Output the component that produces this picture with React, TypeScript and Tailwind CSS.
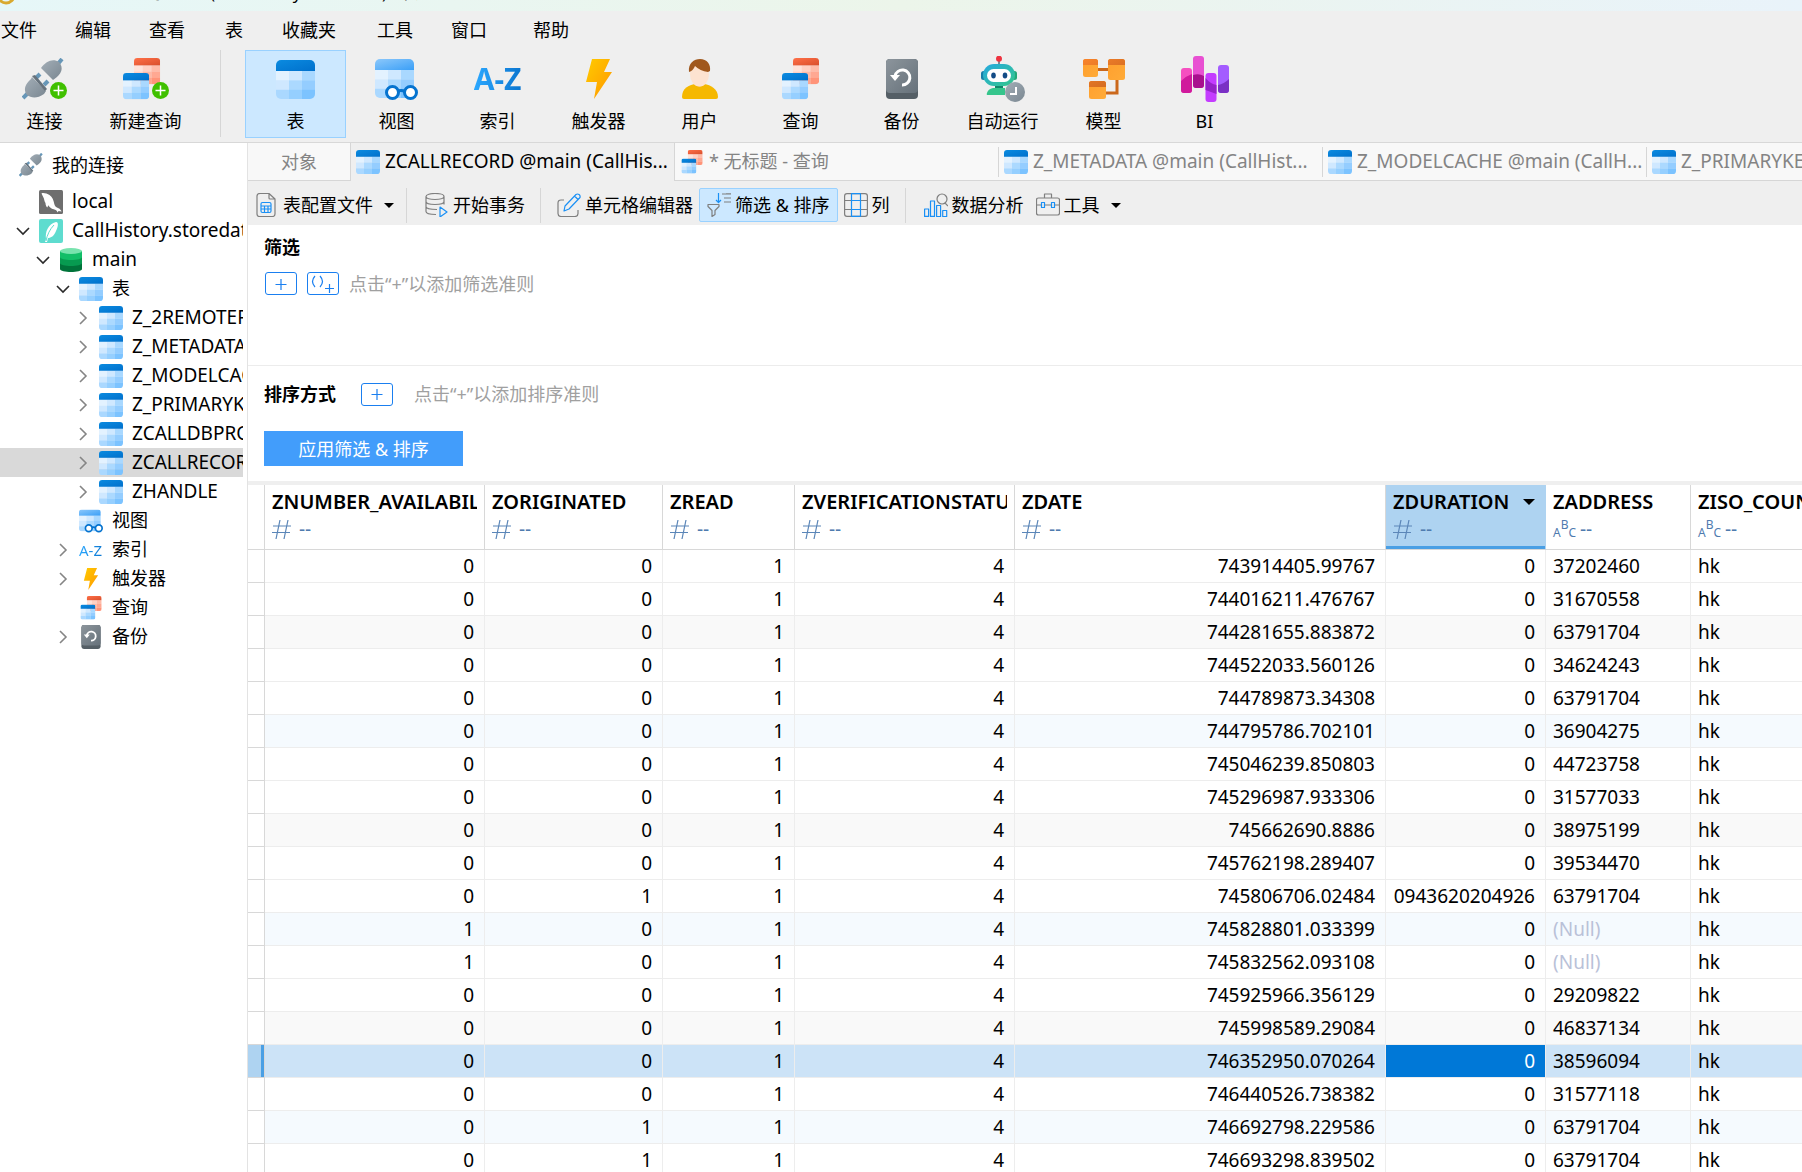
import type { ReactNode } from 'react'
import clsx from 'clsx'

const MENUS = [
  { label: '文件', width: 'w-[74px]' },
  { label: '编辑', width: 'w-[74px]' },
  { label: '查看', width: 'w-[76px]' },
  { label: '表', width: 'w-[57px]' },
  { label: '收藏夹', width: 'w-[95px]' },
  { label: '工具', width: 'w-[74px]' },
  { label: '窗口', width: 'w-[82px]' },
  { label: '帮助', width: 'w-[74px]' },
]

const TABLES = ['Z_2REMOTEPARTICIPANTHANDLES', 'Z_METADATA', 'Z_MODELCACHE', 'Z_PRIMARYKEY', 'ZCALLDBPROPERTIES', 'ZCALLRECORD', 'ZHANDLE']

const COLUMNS = [
  { name: 'ZNUMBER_AVAILABILITY', type: 'num' },
  { name: 'ZORIGINATED', type: 'num' },
  { name: 'ZREAD', type: 'num' },
  { name: 'ZVERIFICATIONSTATUS', type: 'num' },
  { name: 'ZDATE', type: 'num' },
  { name: 'ZDURATION', type: 'num' },
  { name: 'ZADDRESS', type: 'text' },
  { name: 'ZISO_COUNTRY_CODE', type: 'text' },
]

const ROWS: [string, string, string, string, string | null][] = [
  ['0', '0', '743914405.99767', '0', '37202460'],
  ['0', '0', '744016211.476767', '0', '31670558'],
  ['0', '0', '744281655.883872', '0', '63791704'],
  ['0', '0', '744522033.560126', '0', '34624243'],
  ['0', '0', '744789873.34308', '0', '63791704'],
  ['0', '0', '744795786.702101', '0', '36904275'],
  ['0', '0', '745046239.850803', '0', '44723758'],
  ['0', '0', '745296987.933306', '0', '31577033'],
  ['0', '0', '745662690.8886', '0', '38975199'],
  ['0', '0', '745762198.289407', '0', '39534470'],
  ['0', '1', '745806706.02484', '0943620204926', '63791704'],
  ['1', '0', '745828801.033399', '0', null],
  ['1', '0', '745832562.093108', '0', null],
  ['0', '0', '745925966.356129', '0', '29209822'],
  ['0', '0', '745998589.29084', '0', '46837134'],
  ['0', '0', '746352950.070264', '0', '38596094'],
  ['0', '0', '746440526.738382', '0', '31577118'],
  ['0', '1', '746692798.229586', '0', '63791704'],
  ['0', '1', '746693298.839502', '0', '63791704'],
]

const SELECTED_ROW = 15

type IconProps = { className?: string }

function Gradients() {
  const stops = [
    ['blueHead', '#0b8be0', '#0070cc'],
    ['lightHead', '#8cc8fb', '#3a9ff7'],
    ['redHead', '#ff7048', '#d94f2c'],
    ['bolt', '#ffcb00', '#ff9600'],
    ['plug', '#a3aeb7', '#7a8791'],
    ['backup', '#8c959c', '#66717a'],
    ['robot', '#25a9e0', '#35c78a'],
    ['orange', '#ff9f2e', '#ffab38'],
    ['orangeHead', '#f9842b', '#c9651f'],
  ]
  return (
    <svg className="absolute size-0" aria-hidden="true">
      <defs>
        {stops.map(([id, from, to]) => (
          <linearGradient key={id} id={id} x1="0" y1="0" x2="1" y2="1">
            <stop offset="0" stopColor={from} />
            <stop offset="1" stopColor={to} />
          </linearGradient>
        ))}
        <clipPath id="gridClip">
          <rect width="39" height="39" rx="5" />
        </clipPath>
      </defs>
    </svg>
  )
}

const BLUE_CELLS = ['#e3f2ff', '#cfe8ff', '#a9d8ff', '#cfe8ff', '#abd9ff', '#94cdff', '#aad8ff', '#95cfff', '#7cc3ff']
const RED_CELLS = ['#ffe3da', '#ffd1c4', '#ffbba8', '#ffd1c4', '#ffb9a6', '#ffa892', '#ffb9a6', '#ffa58e', '#ff9479']

function Grid({ head = 'url(#blueHead)', cells = BLUE_CELLS }: { head?: string; cells?: string[] }) {
  return (
    <g clipPath="url(#gridClip)">
      {cells.map((fill, i) => (
        <rect key={i} x={(i % 3) * 13} y={11 + Math.floor(i / 3) * 9.4} width="13.2" height="9.6" fill={fill} />
      ))}
      <rect width="39" height="11" fill={head} />
    </g>
  )
}

function TableIcon({ className = 'size-6' }: IconProps) {
  return (
    <svg viewBox="0 0 39 39" className={clsx('shrink-0', className)}>
      <Grid />
    </svg>
  )
}

function ViewIcon({ className = 'size-6' }: IconProps) {
  return (
    <svg viewBox="0 0 43 41" className={clsx('shrink-0', className)}>
      <Grid head="url(#lightHead)" />
      <g stroke="#0573cf" strokeWidth="3" fill="#fff">
        <path d="M22 32.5q4-2 8 0" fill="none" />
        <circle cx="17.500" cy="33.500" r="6" />
        <circle cx="35.500" cy="33.500" r="6" />
      </g>
    </svg>
  )
}

function PlusBadge({ x, y }: { x: number; y: number }) {
  return (
    <g>
      <circle cx={x} cy={y} r="8.500" fill="#40c000" />
      <path d={`M${x - 5} ${y}h10M${x} ${y - 5}v10`} stroke="#fff" strokeWidth="1.500" />
    </g>
  )
}

function QueryIcon({ className = 'size-6', plus = false }: IconProps & { plus?: boolean }) {
  return (
    <svg viewBox={plus ? '0 0 46 42' : '0 0 37 42'} className={clsx('shrink-0', className)}>
      <g transform="translate(11 0) scale(.67)">
        <Grid head="url(#redHead)" cells={RED_CELLS} />
      </g>
      <g transform="translate(0 15) scale(.67)">
        <Grid />
      </g>
      {plus && <PlusBadge x={37.5} y={32.5} />}
    </svg>
  )
}

function PlugIcon({ className = 'size-6', plus = false }: IconProps & { plus?: boolean }) {
  return (
    <svg viewBox={plus ? '0 0 46 42' : '0 0 42 42'} className={clsx('shrink-0', className)}>
      <g stroke="#6797b8" strokeWidth="4" strokeLinecap="butt">
        <path d="M1 40l6-6M35 7l5-6M14 20l4-4M22 27l4-4" />
      </g>
      <path d="M19 10c5-7 12-10 18-6 5 6 3 12-6 18z" fill="url(#plug)" />
      <path d="M10 19L24 33l-2 3c-7 5-13 4-17 1-4-5-2-11 4-16z" fill="url(#plug)" />
      <path d="M10 18l3-1 12 14-2 2z" fill="#66727c" />
      {plus && <PlusBadge x={36.5} y={32.5} />}
    </svg>
  )
}

function BoltIcon({ className = 'size-6' }: IconProps) {
  return (
    <svg viewBox="0 0 28 40" className={clsx('shrink-0', className)}>
      <path d="M7 0h18l-6 13h8L9 40l3-17H1z" fill="url(#bolt)" />
    </svg>
  )
}

function AzIcon({ large = false }: { large?: boolean }) {
  return (
    <span
      className={clsx(
        'bg-linear-to-r from-[#2ba8ff] to-[#0a76d0] bg-clip-text text-transparent',
        large ? 'text-[30px] leading-[42px] font-bold' : 'w-6 text-[15px] leading-6',
      )}
    >
      A-Z
    </span>
  )
}

function UserIcon({ className }: IconProps) {
  return (
    <svg viewBox="0 0 36 40" className={className}>
      <path d="M0 38c0-9 7-12 13-13h9c7 1 14 5 14 13q0 2-2 2H2q-2 0-2-2z" fill="#f5b800" />
      <path d="M12 23h11v2q-5 5-11 0z" fill="#f7cfb4" />
      <ellipse cx="17.500" cy="15.500" rx="9.500" ry="12" fill="#fde3d0" />
      <path d="M7 13C6 4 12 0 18 0c7 0 11 5 10 12l-2 1q-8-1-13-6-2 5-6 6z" fill="#a0581d" />
    </svg>
  )
}

function BackupIcon({ className = 'h-6 w-5' }: IconProps) {
  return (
    <svg viewBox="0 0 32 40" className={clsx('shrink-0', className)}>
      <rect width="32" height="40" rx="4" fill="#555f66" />
      <path d="M4 0h24q4 0 4 4v26q0 4-4 4H4q-4 0-4-4V4q0-4 4-4z" fill="url(#backup)" />
      <path d="M9 17a7.500 7.500 0 1 1 7 9" fill="none" stroke="#fff" strokeWidth="3" />
      <path d="M4 16h10l-5 6z" fill="#fff" />
    </svg>
  )
}

function RobotIcon({ className }: IconProps) {
  return (
    <svg viewBox="0 0 44 46" className={className}>
      <path d="M18 4v5" stroke="#7d8890" strokeWidth="2" />
      <circle cx="18" cy="2.700" r="3" fill="#ee3340" />
      <rect x="0" y="15" width="5" height="9" rx="2.500" fill="#177fa8" />
      <rect x="31" y="15" width="5" height="9" rx="2.500" fill="#22a877" />
      <path d="M14 29h8v4h-8z" fill="#12866a" />
      <path d="M6 37q1-4 6-5h12v7H7q-2 0-1-2z" fill="#35c58c" />
      <rect x="2" y="8" width="32" height="22" rx="11" fill="url(#robot)" />
      <rect x="6" y="13" width="24" height="13" rx="6.500" fill="#fff" />
      <ellipse cx="12.500" cy="19.500" rx="2.300" ry="3" fill="#124b86" />
      <ellipse cx="24" cy="19.500" rx="2.300" ry="3" fill="#124b86" />
      <circle cx="34" cy="36" r="10" fill="url(#plug)" />
      <path d="M35 31v7h-6" stroke="#fff" strokeWidth="2" fill="none" />
    </svg>
  )
}

function ModelIcon({ className }: IconProps) {
  return (
    <svg viewBox="0 0 42 40" className={className}>
      <path d="M14 10.500h12M34 20v14H23" stroke="#cb681c" strokeWidth="3" fill="none" />
      <rect x="0" y="0" width="15" height="18" rx="2.500" fill="url(#orange)" />
      <rect x="25" y="0" width="17" height="21" rx="2.500" fill="url(#orange)" />
      <rect x="6" y="22" width="17" height="18" rx="2.500" fill="url(#orange)" />
      <path d="M0 6V2.500Q0 0 2.500 0h10Q15 0 15 2.500V6zM25 6V2.500Q25 0 27.500 0h12Q42 0 42 2.500V6zM6 28v-3.500q0-2.500 2.500-2.500h12q2.500 0 2.500 2.500V28z" fill="url(#orangeHead)" />
    </svg>
  )
}

function BiIcon({ className }: IconProps) {
  return (
    <svg viewBox="0 0 48 46" className={className}>
      <rect x="0" y="12" width="11" height="25" rx="3" fill="#f54fc0" />
      <path d="M0 25q5-5 11-7v16q0 3-3 3H3q-3 0-3-3z" fill="#d01a9c" />
      <rect x="12" y="0" width="11" height="32" rx="3" fill="#e850d2" />
      <path d="M12 19q6-2 11 1v9q0 3-3 3h-5q-3 0-3-3z" fill="#a8108e" />
      <rect x="24.500" y="17" width="11" height="29" rx="3" fill="#c43cff" />
      <path d="M24.500 22q5 6 11 7v9l-11-4z" fill="#9622c8" />
      <rect x="37" y="9" width="11" height="28" rx="3" fill="#a45cff" />
      <path d="M37 29q6-1 11-6v11q0 3-3 3h-5q-3 0-3-3z" fill="#7a30c4" />
    </svg>
  )
}

function DolphinIcon() {
  return (
    <svg viewBox="0 0 24 24" className="size-6 shrink-0">
      <rect width="24" height="24" rx="1.500" fill="#6e6e6e" />
      <path d="M2.500 3.500C4 2.500 8 3.500 10.500 5c3 2 4 5 4.800 9 .5 2.500 2 3.500 4.200 4.200 1.500.6 2.500 2 3 3.300l-3-.6-.8 1.600c-.8-2-2-2.800-4-3.200-2.500-.5-4.200-2-5.200-4l-1.300 2.200C7 16 6.500 14.500 6.500 13 5 11 5.500 9 4.200 7z" fill="#fff" />
    </svg>
  )
}

function FeatherIcon() {
  return (
    <svg viewBox="0 0 24 24" className="size-6 shrink-0">
      <rect width="24" height="24" rx="2" fill="#5edccf" />
      <path d="M7 20C6 13 9 5 17 3c3 0 2 5 0 9-2 5-5 7-8 7l-1 4H6z" fill="#fff" />
      <path d="M7 22c1-6 4-12 8-16" stroke="#5edccf" strokeWidth="1" fill="none" />
    </svg>
  )
}

function DatabaseIcon() {
  return (
    <svg viewBox="0 0 22 24" className="h-6 w-[22px] shrink-0">
      <path d="M0 3v18c0 4 22 4 22 0V3z" fill="#00733a" />
      <path d="M0 3v12c0 4 22 4 22 0V3z" fill="#079b50" />
      <path d="M0 3v6c0 4 22 4 22 0V3z" fill="#12be68" />
      <ellipse cx="11" cy="3" rx="11" ry="3" fill="#78e3ae" />
    </svg>
  )
}

function LineIcon({ grey, blue }: { grey: string; blue: string }) {
  return (
    <svg viewBox="0 0 24 24" className="size-6 shrink-0" fill="none" strokeWidth="1.200" strokeLinejoin="round">
      <path d={grey} stroke="#7f7f7f" />
      <path d={blue} stroke="#1a90f5" />
    </svg>
  )
}

const TOOL_ICONS = {
  profile: {
    grey: 'M5 .5h9l6 5.500v15q0 2.500-2.500 2.500h-13Q2 23.500 2 21V3Q2 .5 5 .5zM14 .5V5q0 1 1 1h5',
    blue: 'M6 11q0-1.500 1.500-1.500h7q1.500 0 1.500 1.500v7q0 1.500-1.500 1.500h-7Q6 19.500 6 18zM6 13h10M6 16h10M9.500 13v6.500M13 13v6.500',
  },
  transaction: {
    grey: 'M1 3.500c0-4 18-4 18 0s-18 4-18 0v15c0 2 5 3 10 3M19 3.500v8M1 8.500c0 4 18 4 18 0M1 13.500c0 2 5 3 11 3',
    blue: 'M15 14l7 5-7 5z',
  },
  editor: {
    grey: 'M7 7H4Q1 7 1 10v10.500q0 3 3 3h14q3 0 3-3V17',
    blue: 'M7 18l1-5L19 1.500q1.500-1 3 0t1 3L12 16zM17.500 3l4 4',
  },
  sort: {
    grey: 'M1 11.500h11v2l-4 4v4l-3 2v-6l-4-4zM15 1h9M17 5h7M17 9h7M19 .8h5',
    blue: 'M11.500 0v9M9 7l2.500 2.500L14 7',
  },
  columns: {
    grey: 'M3 .6h18q2.400 0 2.400 2.400v18q0 2.400-2.400 2.400H3Q.6 23.400.6 21V3Q.6.6 3 .6zM.6 7.500h23M.6 16.500h23',
    blue: 'M7.500.6v23M16.500.6v23M7.500.6h9M7.500 7.500h9M7.500 16.500h9M7.500 23.400h9',
  },
  analysis: {
    grey: 'M13 6a5 5 0 1 1 10 0a5 5 0 0 1-10 0zM21 10l3 3',
    blue: 'M.6 16h4v7.400h-4zM6.500 8h4v15.400h-4zM12.600 12.500h4v11h-4zM18.700 17.500h4v6h-4z',
  },
  toolbox: {
    grey: 'M2.500 5h19q2 0 2 2v13q0 2-2 2h-19q-2 0-2-2V7q0-2 2-2zM8.500 5V1h7v4M.6 12h4.500M9 12h6M19 12h4.500',
    blue: 'M5.500 9.500h3v5h-3zM15.500 9.500h3v5h-3z',
  },
}

function Chevron({ open, className }: { open?: boolean; className?: string }) {
  return (
    <svg viewBox="0 0 14 14" className={clsx('size-[14px] shrink-0', className)} fill="none" strokeWidth="1.600">
      {open ? <path d="M1 4l6 6 6-6" stroke="#2a2a2a" /> : <path d="M4 1l6 6-6 6" stroke="#858585" />}
    </svg>
  )
}

function Caret({ className }: { className: string }) {
  return <span className={clsx('block h-0 w-0 border-x-transparent border-t-black', className)} />
}

function MainButton({ icon, label, active }: { icon: ReactNode; label: string; active?: boolean }) {
  return (
    <button
      className={clsx(
        'flex h-[88px] w-[101px] shrink-0 flex-col items-center justify-between border pt-1 pb-[3px]',
        active ? 'border-[#99d1ff] bg-[#cce8ff]' : 'border-transparent',
      )}
    >
      <span className="flex h-[48px] items-center justify-center">{icon}</span>
      <span className="leading-[26px] whitespace-nowrap">{label}</span>
    </button>
  )
}

const INDENTS = ['pl-4', 'pl-9', 'pl-14', 'pl-[76px]']

function TreeRow({ level, icon, label, open, leaf, selected }: { level: number; icon: ReactNode; label: string; open?: boolean; leaf?: boolean; selected?: boolean }) {
  return (
    <li className={clsx('flex h-[29px] items-center', INDENTS[level], selected && 'bg-[#d9d9d9]')}>
      <Chevron open={open} className={leaf ? 'invisible' : ''} />
      <span className="ml-[9px] flex w-6 shrink-0 justify-center">{icon}</span>
      <span className={clsx('ml-[9px] pb-[2px] whitespace-nowrap', /^[A-Za-z]/.test(label) && 'text-[19px]')}>{label}</span>
    </li>
  )
}

function Sidebar() {
  return (
    <nav className="w-[248px] shrink-0 border-r border-[#e3e3e3] bg-white pr-1">
      <div className="flex h-[44px] items-center pl-[19px]">
        <PlugIcon />
        <span className="ml-[9px]">我的连接</span>
      </div>
      <ul className="overflow-hidden">
        <TreeRow level={0} icon={<DolphinIcon />} label="local" leaf />
        <TreeRow level={0} icon={<FeatherIcon />} label="CallHistory.storedata" open />
        <TreeRow level={1} icon={<DatabaseIcon />} label="main" open />
        <TreeRow level={2} icon={<TableIcon />} label="表" open />
        {TABLES.map((name) => (
          <TreeRow key={name} level={3} icon={<TableIcon />} label={name} selected={name === 'ZCALLRECORD'} />
        ))}
        <TreeRow level={2} icon={<ViewIcon />} label="视图" leaf />
        <TreeRow level={2} icon={<AzIcon />} label="索引" />
        <TreeRow level={2} icon={<BoltIcon className="h-[22px] w-4" />} label="触发器" />
        <TreeRow level={2} icon={<QueryIcon />} label="查询" leaf />
        <TreeRow level={2} icon={<BackupIcon />} label="备份" />
      </ul>
    </nav>
  )
}

function Tab({ icon, label, active, divider }: { icon: ReactNode; label: string; active?: boolean; divider?: boolean }) {
  return (
    <button
      className={clsx(
        'flex h-[38px] w-[324px] shrink-0 items-center text-left whitespace-nowrap',
        active ? 'border-r border-[#d6d6d6] text-black' : 'border-b border-[#d6d6d6] bg-[#f8f8f8] text-[#848484]',
      )}
    >
      <span className="ml-[5px] flex h-[34px] items-center">{icon}</span>
      <span className={clsx('mb-[2px] ml-[5px] grow', label.startsWith('Z') && 'text-[19px]')}>{label}</span>
      {divider && <span className="h-[30px] w-px bg-[#d6d6d6]" />}
    </button>
  )
}

function Tool({ icon, label, caret, active }: { icon: keyof typeof TOOL_ICONS; label: string; caret?: boolean; active?: boolean }) {
  return (
    <button
      className={clsx(
        'flex h-[34px] shrink-0 items-center gap-1 rounded-xs border whitespace-nowrap',
        active ? 'border-[#99d1ff] bg-[#cce8ff] px-[7px]' : 'border-transparent px-[5px]',
      )}
    >
      <LineIcon {...TOOL_ICONS[icon]} />
      <span>{label}</span>
      {caret && <Caret className="ml-[7px] border-x-[5px] border-t-[5px]" />}
    </button>
  )
}

function AddButton({ label, group }: { label: string; group?: boolean }) {
  return (
    <button aria-label={label} className="flex h-[23px] w-8 items-center justify-center rounded-[3px] border border-[#1a7ff0]">
      <svg viewBox="0 0 24 18" className="h-[18px] w-6" fill="none" stroke="#1a7ff0" strokeWidth="1.200">
        {group ? <path d="M4 1q-5 5.500 0 11M9 1q5 5.500 0 11M14 13.500h9M18.500 9v9" /> : <path d="M6.500 9.500h11M12 4v11" />}
      </svg>
    </button>
  )
}

function FilterPanel() {
  return (
    <section className="bg-white">
      <div className="h-[141px] border-b border-[#ececec] px-4 pt-[9px]">
        <h2 className="leading-[26px] font-bold">筛选</h2>
        <div className="mt-3 flex h-[23px] items-center gap-[10px] pl-px">
          <AddButton label="添加筛选准则" />
          <AddButton label="添加括号" group />
          <span className="text-[#a0a0a0]">点击“+”以添加筛选准则</span>
        </div>
      </div>
      <div className="px-4 pt-[15px] pb-[15px]">
        <div className="flex h-[26px] items-center">
          <h2 className="font-bold">排序方式</h2>
          <span className="ml-[25px] flex">
            <AddButton label="添加排序准则" />
          </span>
          <span className="ml-[21px] text-[#a0a0a0]">点击“+”以添加排序准则</span>
        </div>
        <button className="mt-6 h-[35px] w-[199px] bg-[#429dfb] text-white">应用筛选 &amp; 排序</button>
      </div>
    </section>
  )
}

function TypeMark({ type }: { type: string }) {
  return (
    <span className="flex h-7 items-center gap-[7px] font-normal text-[#4f7baf]">
      {type === 'num' ? (
        <svg viewBox="0 0 20 19" className="h-[19px] w-5" stroke="#5b86b8" strokeWidth="1.200">
          <path d="M8 0L4 19M16 0l-4 19M1 6h18M0 12.500h18" />
        </svg>
      ) : (
        <span className="flex h-5 w-5 text-[12px] leading-[12px]">
          <span className="self-end">A</span>
          <span>B</span>
          <span className="self-end">C</span>
        </span>
      )}
      <span>--</span>
    </span>
  )
}

function DataGrid() {
  const body = 'h-[33px] overflow-hidden border-r border-b border-[#ededed] whitespace-nowrap'
  return (
    <div className="min-h-0 grow overflow-hidden border-t-4 border-[#efefef] bg-white">
      <table className="w-[1642px] table-fixed border-separate border-spacing-0 text-[19px]">
        <colgroup>
          <col className="w-[17px]" />
          <col className="w-[220px]" />
          <col className="w-[178px]" />
          <col className="w-[132px]" />
          <col className="w-[220px]" />
          <col className="w-[371px]" />
          <col className="w-[160px]" />
          <col className="w-[145px]" />
          <col className="w-[199px]" />
        </colgroup>
        <thead>
          <tr>
            <th className="h-[65px] border-r border-b border-[#d8d8d8]" />
            {COLUMNS.map(({ name, type }) => {
              const sorted = name === 'ZDURATION'
              return (
                <th
                  key={name}
                  scope="col"
                  className={clsx(
                    'h-[65px] border-r border-b px-[7px] pt-1 text-left align-top',
                    sorted ? 'border-b-[#d8d8d8] border-r-[#aed3f1] bg-[#aed3f1] shadow-[inset_0_-3px_0_#4a9fe4]' : 'border-[#d8d8d8]',
                  )}
                >
                  <span className="flex items-center justify-between text-[20px] leading-[26px] font-semibold">
                    <span className="overflow-hidden whitespace-nowrap">{name}</span>
                    {sorted && <Caret className="mr-[3px] border-x-[6px] border-t-[6px]" />}
                  </span>
                  <TypeMark type={type} />
                </th>
              )
            })}
          </tr>
        </thead>
        <tbody>
          {ROWS.map(([available, originated, date, duration, address], i) => {
            const selected = i === SELECTED_ROW
            const number = clsx(body, 'pr-[10px] text-right')
            const text = clsx(body, 'pl-[7px]')
            return (
              <tr
                key={date}
                className={clsx(
                  'leading-8',
                  selected ? 'bg-[#cce3f7]' : i % 6 === 2 ? 'bg-[#f9f9f9]' : i % 6 === 5 ? 'bg-[#f5fafe]' : 'bg-white',
                )}
              >
                <td
                  className={clsx(
                    'h-[33px] border-r border-b border-[#d8d8d8]',
                    selected ? 'bg-[#aed3f1] shadow-[inset_-3px_0_0_#4a9fe4]' : 'bg-white',
                  )}
                />
                <td className={number}>{available}</td>
                <td className={number}>{originated}</td>
                <td className={number}>1</td>
                <td className={number}>4</td>
                <td className={number}>{date}</td>
                <td className={clsx(number, selected && 'bg-[#0078d7] text-white')}>{duration}</td>
                <td className={clsx(text, !address && 'text-[#b9c1d8]')}>{address ?? '(Null)'}</td>
                <td className={text}>hk</td>
              </tr>
            )
          })}
        </tbody>
      </table>
    </div>
  )
}

function Divider({ className }: { className?: string }) {
  return <span className={clsx('w-px shrink-0 bg-[#d6d6d6]', className)} />
}

export default function App() {
  return (
    <div className="flex h-screen flex-col overflow-hidden bg-[#efefef] font-['Noto_Sans','Noto_Sans_CJK_SC',sans-serif] text-[18px] leading-6 text-black">
      <Gradients />
      <header className="shrink-0">
        <div className="flex h-[11px] items-end overflow-hidden bg-linear-to-r from-[#e6f7f8] via-[#ecf5ea] to-[#e9f3fa]">
          <svg viewBox="0 0 16 16" className="mb-[6px] size-4 shrink-0 overflow-visible">
            <circle cx="6" cy="6" r="8" fill="none" stroke="#d9a92f" strokeWidth="3" />
          </svg>
          <span className="mb-[6px] ml-[14px] text-[17px] leading-6 whitespace-nowrap">ZCALLRECORD @main (CallHistory.storedata) - 表</span>
        </div>
        <div className="flex h-[39px] items-center pb-[2px] pl-px">
          {MENUS.map(({ label, width }) => (
            <button key={label} className={clsx('text-left', width)}>
              {label}
            </button>
          ))}
        </div>
        <div className="flex h-[93px] border-b border-[#d8d8d8]">
          <div className="flex w-[220px] shrink-0">
            <div className="-ml-[6px]">
              <MainButton icon={<PlugIcon plus className="h-[42px] w-[46px]" />} label="连接" />
            </div>
            <MainButton icon={<QueryIcon plus className="h-[42px] w-[46px]" />} label="新建查询" />
          </div>
          <Divider className="mr-6 h-[87px]" />
          <MainButton icon={<TableIcon className="size-[39px]" />} label="表" active />
          <MainButton icon={<ViewIcon className="h-[41px] w-[43px]" />} label="视图" />
          <MainButton icon={<AzIcon large />} label="索引" />
          <MainButton icon={<BoltIcon className="h-10 w-7" />} label="触发器" />
          <MainButton icon={<UserIcon className="h-10 w-9" />} label="用户" />
          <MainButton icon={<QueryIcon className="h-[42px] w-[37px]" />} label="查询" />
          <MainButton icon={<BackupIcon className="h-10 w-8" />} label="备份" />
          <MainButton icon={<RobotIcon className="h-[46px] w-11" />} label="自动运行" />
          <MainButton icon={<ModelIcon className="h-10 w-[42px]" />} label="模型" />
          <MainButton icon={<BiIcon className="h-[46px] w-12" />} label="BI" />
        </div>
      </header>
      <div className="flex min-h-0 grow">
        <Sidebar />
        <main className="flex min-w-0 grow flex-col overflow-hidden">
          <div className="flex shrink-0 overflow-hidden">
            <button className="h-[38px] w-[103px] shrink-0 border-r border-b border-[#d6d6d6] bg-[#f8f8f8] text-[#848484]">对象</button>
            <Tab icon={<TableIcon />} label="ZCALLRECORD @main (CallHis..." active />
            <Tab icon={<QueryIcon />} label="* 无标题 - 查询" divider />
            <Tab icon={<TableIcon />} label="Z_METADATA @main (CallHist..." divider />
            <Tab icon={<TableIcon />} label="Z_MODELCACHE @main (CallH..." divider />
            <Tab icon={<TableIcon />} label="Z_PRIMARYKEY @main (CallHi..." />
          </div>
          <div className="flex h-[44px] shrink-0 items-center pt-1 pl-px">
            <Tool icon="profile" label="表配置文件" caret />
            <Divider className="mr-3 ml-[6px] h-[35px]" />
            <Tool icon="transaction" label="开始事务" />
            <Divider className="mr-[10px] ml-[9px] h-[35px]" />
            <Tool icon="editor" label="单元格编辑器" />
            <Tool icon="sort" label="筛选 & 排序" active />
            <Tool icon="columns" label="列" />
            <Divider className="mr-3 ml-[9px] h-[35px]" />
            <Tool icon="analysis" label="数据分析" />
            <Tool icon="toolbox" label="工具" caret />
          </div>
          <FilterPanel />
          <DataGrid />
        </main>
      </div>
    </div>
  )
}
